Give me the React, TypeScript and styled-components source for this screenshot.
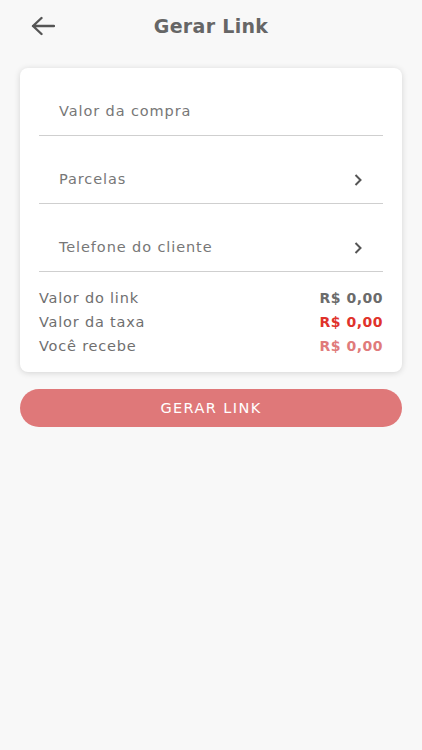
import React from "react";
import styled, { createGlobalStyle } from "styled-components";

const GlobalStyle = createGlobalStyle`
  html, body {
    margin: 0;
    padding: 0;
    background: #f8f8f8;
  }
  body {
    font-family: "DejaVu Sans", "Liberation Sans", sans-serif;
  }
`;

const Page = styled.div`
  width: 422px;
  min-height: 750px;
  background: #f8f8f8;
  padding: 0 20px;
  box-sizing: border-box;
`;

const Header = styled.header`
  height: 52px;
  display: flex;
  align-items: center;
  justify-content: center;
  position: relative;
`;

const BackButton = styled.button`
  position: absolute;
  left: 10px;
  top: 13px;
  background: none;
  border: none;
  padding: 0;
  width: 26px;
  height: 26px;
  display: flex;
  align-items: center;
  justify-content: center;
  color: #666;
`;

const Title = styled.h1`
  margin: 0;
  font-size: 19px;
  font-weight: bold;
  color: #666;
  letter-spacing: 0.3px;
`;

const Card = styled.section`
  margin-top: 16px;
  background: #fff;
  border-radius: 8px;
  box-shadow: 0 1px 6px rgba(0, 0, 0, 0.15);
  padding: 0 19px 14px;
`;

const Field = styled.div`
  height: 68px;
  border-bottom: 1px solid #cfcfcf;
  display: flex;
  align-items: flex-end;
  justify-content: space-between;
  padding: 0 20px 16px;
  box-sizing: border-box;
`;

const FieldLabel = styled.span`
  font-size: 14.5px;
  color: #777;
  letter-spacing: 0.9px;
`;

const Summary = styled.div`
  padding-top: 14px;
  display: flex;
  flex-direction: column;
`;

const SummaryRow = styled.div`
  height: 24px;
  display: flex;
  align-items: center;
  justify-content: space-between;
`;

const SummaryLabel = styled.span`
  font-size: 14.5px;
  color: #6f6f6f;
  letter-spacing: 0.8px;
`;

const SummaryValue = styled.span<{ $color: string }>`
  font-size: 14px;
  font-weight: bold;
  color: ${(p) => p.$color};
  letter-spacing: 0.5px;
`;

const SubmitButton = styled.button`
  margin-top: 17px;
  width: 100%;
  height: 38px;
  border: none;
  border-radius: 19px;
  background: #df7879;
  color: #fff;
  font-family: "DejaVu Sans", "Liberation Sans", sans-serif;
  font-size: 14.5px;
  letter-spacing: 1.4px;
`;

const Chevron = () => (
  <svg width="10" height="14" viewBox="0 0 10 14">
    <path d="M2.5 2 L7.5 7 L2.5 12" fill="none" stroke="#555" strokeWidth="2" />
  </svg>
);

const ArrowLeft = () => (
  <svg width="24" height="20" viewBox="0 0 24 20">
    <path
      d="M23 10 H2 M10.5 2 L2 10 L10.5 18"
      fill="none"
      stroke="#555"
      strokeWidth="2.4"
      strokeLinecap="round"
      strokeLinejoin="round"
    />
  </svg>
);

const fields = [
  { label: "Valor da compra", chevron: false },
  { label: "Parcelas", chevron: true },
  { label: "Telefone do cliente", chevron: true },
];

const summary = [
  { label: "Valor do link", value: "R$ 0,00", color: "#6b6b6b" },
  { label: "Valor da taxa", value: "R$ 0,00", color: "#e0322b" },
  { label: "Você recebe", value: "R$ 0,00", color: "#e07b7b" },
];

export default function App() {
  return (
    <>
      <GlobalStyle />
      <Page>
        <Header>
          <BackButton aria-label="Voltar">
            <ArrowLeft />
          </BackButton>
          <Title>Gerar Link</Title>
        </Header>
        <Card>
          {fields.map((f) => (
            <Field key={f.label}>
              <FieldLabel>{f.label}</FieldLabel>
              {f.chevron && <Chevron />}
            </Field>
          ))}
          <Summary>
            {summary.map((s) => (
              <SummaryRow key={s.label}>
                <SummaryLabel>{s.label}</SummaryLabel>
                <SummaryValue $color={s.color}>{s.value}</SummaryValue>
              </SummaryRow>
            ))}
          </Summary>
        </Card>
        <SubmitButton>GERAR LINK</SubmitButton>
      </Page>
    </>
  );
}
